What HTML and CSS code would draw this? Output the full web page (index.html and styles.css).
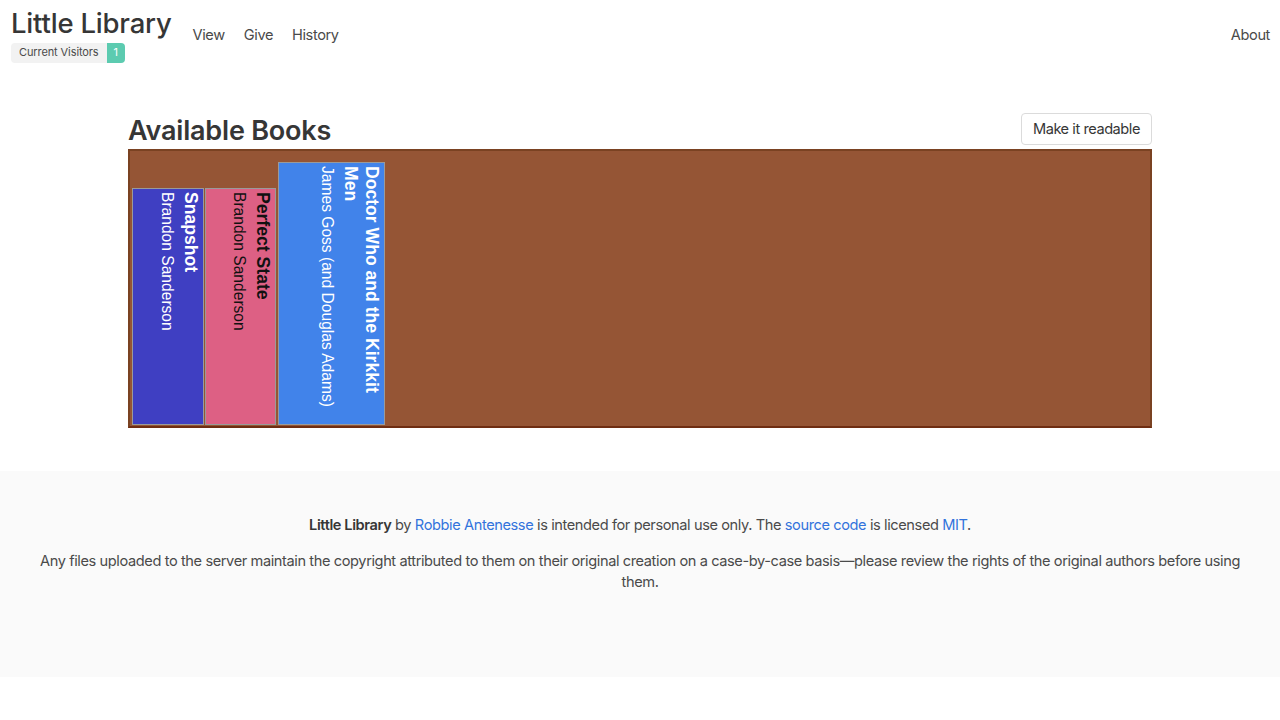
FILE: index.html
```html
<!DOCTYPE html>
<html lang="en">
<head>
<meta charset="utf-8">
<title>Little Library</title>
<link rel="stylesheet" href="styles.css">
</head>
<body>
<nav class="navbar">
  <div class="brand">
    <a class="brand-title" href="#">Little Library</a>
    <div class="tags">
      <span class="tag">Current Visitors</span><span class="tag tag-primary">1</span>
    </div>
  </div>
  <div class="nav-start">
    <a class="nav-item" href="#">View</a>
    <a class="nav-item" href="#">Give</a>
    <a class="nav-item" href="#">History</a>
  </div>
  <div class="nav-end">
    <a class="nav-item" href="#">About</a>
  </div>
</nav>

<main class="section">
  <div class="container">
    <div class="heading-row">
      <h1 class="title">Available Books</h1>
      <button class="button">Make it readable</button>
    </div>
    <div class="shelf">
      <div class="book book-indigo" style="width:72px;height:237px">
        <span class="book-title">Snapshot</span>
        <span class="book-author">Brandon Sanderson</span>
      </div>
      <div class="book book-pink" style="width:71px;height:237px">
        <span class="book-title">Perfect State</span>
        <span class="book-author">Brandon Sanderson</span>
      </div>
      <div class="book book-blue" style="width:107px;height:263px">
        <span class="book-title">Doctor Who and the Kirkkit Men</span>
        <span class="book-author">James Goss (and Douglas Adams)</span>
      </div>
    </div>
  </div>
</main>

<footer class="footer">
  <p><strong>Little Library</strong> by <a href="#">Robbie Antenesse</a> is intended for personal use only. The <a href="#">source code</a> is licensed <a href="#">MIT</a>.</p>
  <p>Any files uploaded to the server maintain the copyright attributed to them on their original creation on a case-by-case basis—please review the rights of the original authors before using them.</p>
</footer>
</body>
</html>
```

FILE: styles.css
```css
* { box-sizing: border-box; }

html, body {
  margin: 0;
  padding: 0;
  background: #fff;
  font-family: Inter, "Noto Sans", "Liberation Sans", sans-serif;
  color: #4a4a4a;
  font-size: 14.6px;
  letter-spacing: -0.4px;
  line-height: 1.4;
}

a { text-decoration: none; }

.navbar {
  display: flex;
  align-items: stretch;
  height: 70px;
}

.brand {
  display: flex;
  flex-direction: column;
  padding: 6px 11px 0 11px;
}

.brand-title {
  font-size: 27.5px;
  font-weight: 500;
  color: #363636;
  line-height: 34px;
  letter-spacing: -0.2px;
}

.tags {
  display: flex;
  margin-top: 3px;
}

.tag {
  display: inline-flex;
  align-items: center;
  height: 20px;
  padding: 0 8px;
  font-size: 11px;
  letter-spacing: -0.1px;
  background: #f2f2f2;
  color: #4a4a4a;
  border-radius: 4px 0 0 4px;
}

.tag-primary {
  background: #5ccbb0;
  color: #fff;
  border-radius: 0 4px 4px 0;
  padding: 0 7px;
}

.nav-start {
  display: flex;
  align-items: center;
}

.nav-end {
  display: flex;
  align-items: center;
  margin-left: auto;
}

.nav-item {
  color: #4a4a4a;
  padding: 0 9px 0 10px;
  line-height: 1;
}

.nav-end .nav-item { padding: 0 10px 0 12px; }

.section {
  padding: 43px 0 43px;
}

.container {
  width: 1024px;
  margin: 0 auto;
}

.heading-row {
  display: flex;
  align-items: flex-end;
  justify-content: space-between;
}

.title {
  margin: 0 0 3px;
  font-size: 27px;
  font-weight: 600;
  color: #363636;
  line-height: 30px;
  letter-spacing: -0.2px;
}

.button {
  font-family: inherit;
  font-size: 14.6px;
  letter-spacing: -0.45px;
  color: #363636;
  background: #fff;
  border: 1px solid #dbdbdb;
  border-radius: 4px;
  height: 32px;
  padding: 0 11px;
  margin-bottom: 4px;
  cursor: pointer;
}

.shelf {
  height: 279px;
  background: #955535;
  border: 2px solid #7a4222;
  border-bottom-color: #6e2d12;
  padding: 0 2px 1px 2px;
  display: flex;
  align-items: flex-end;
  gap: 1px;
}

.book {
  border: 1px solid #9a9a9a;
  writing-mode: vertical-rl;
  display: flex;
  flex-direction: column;
  padding: 3px 2px 3px 2px;
  font-family: "Liberation Sans", Arial, sans-serif;
  letter-spacing: 0;
}

.book + .book + .book { margin-left: 1px; }

.book-title {
  font-weight: 700;
  font-size: 17.6px;
  line-height: 21px;
}

.book-author {
  font-size: 15.6px;
  line-height: 25px;
}

.book-indigo { background: #3f3fc2; color: #fff; }
.book-pink { background: #dd6084; color: #111; }
.book-blue { background: #4183ea; color: #fff; }

.footer {
  background: #fafafa;
  padding: 44px 24px 69px;
  text-align: center;
  color: #4a4a4a;
  line-height: 21px;
}

.footer p { margin: 0 0 15px; }

.footer strong { color: #363636; font-weight: 600; }

.footer a { color: #3273dc; }
```
